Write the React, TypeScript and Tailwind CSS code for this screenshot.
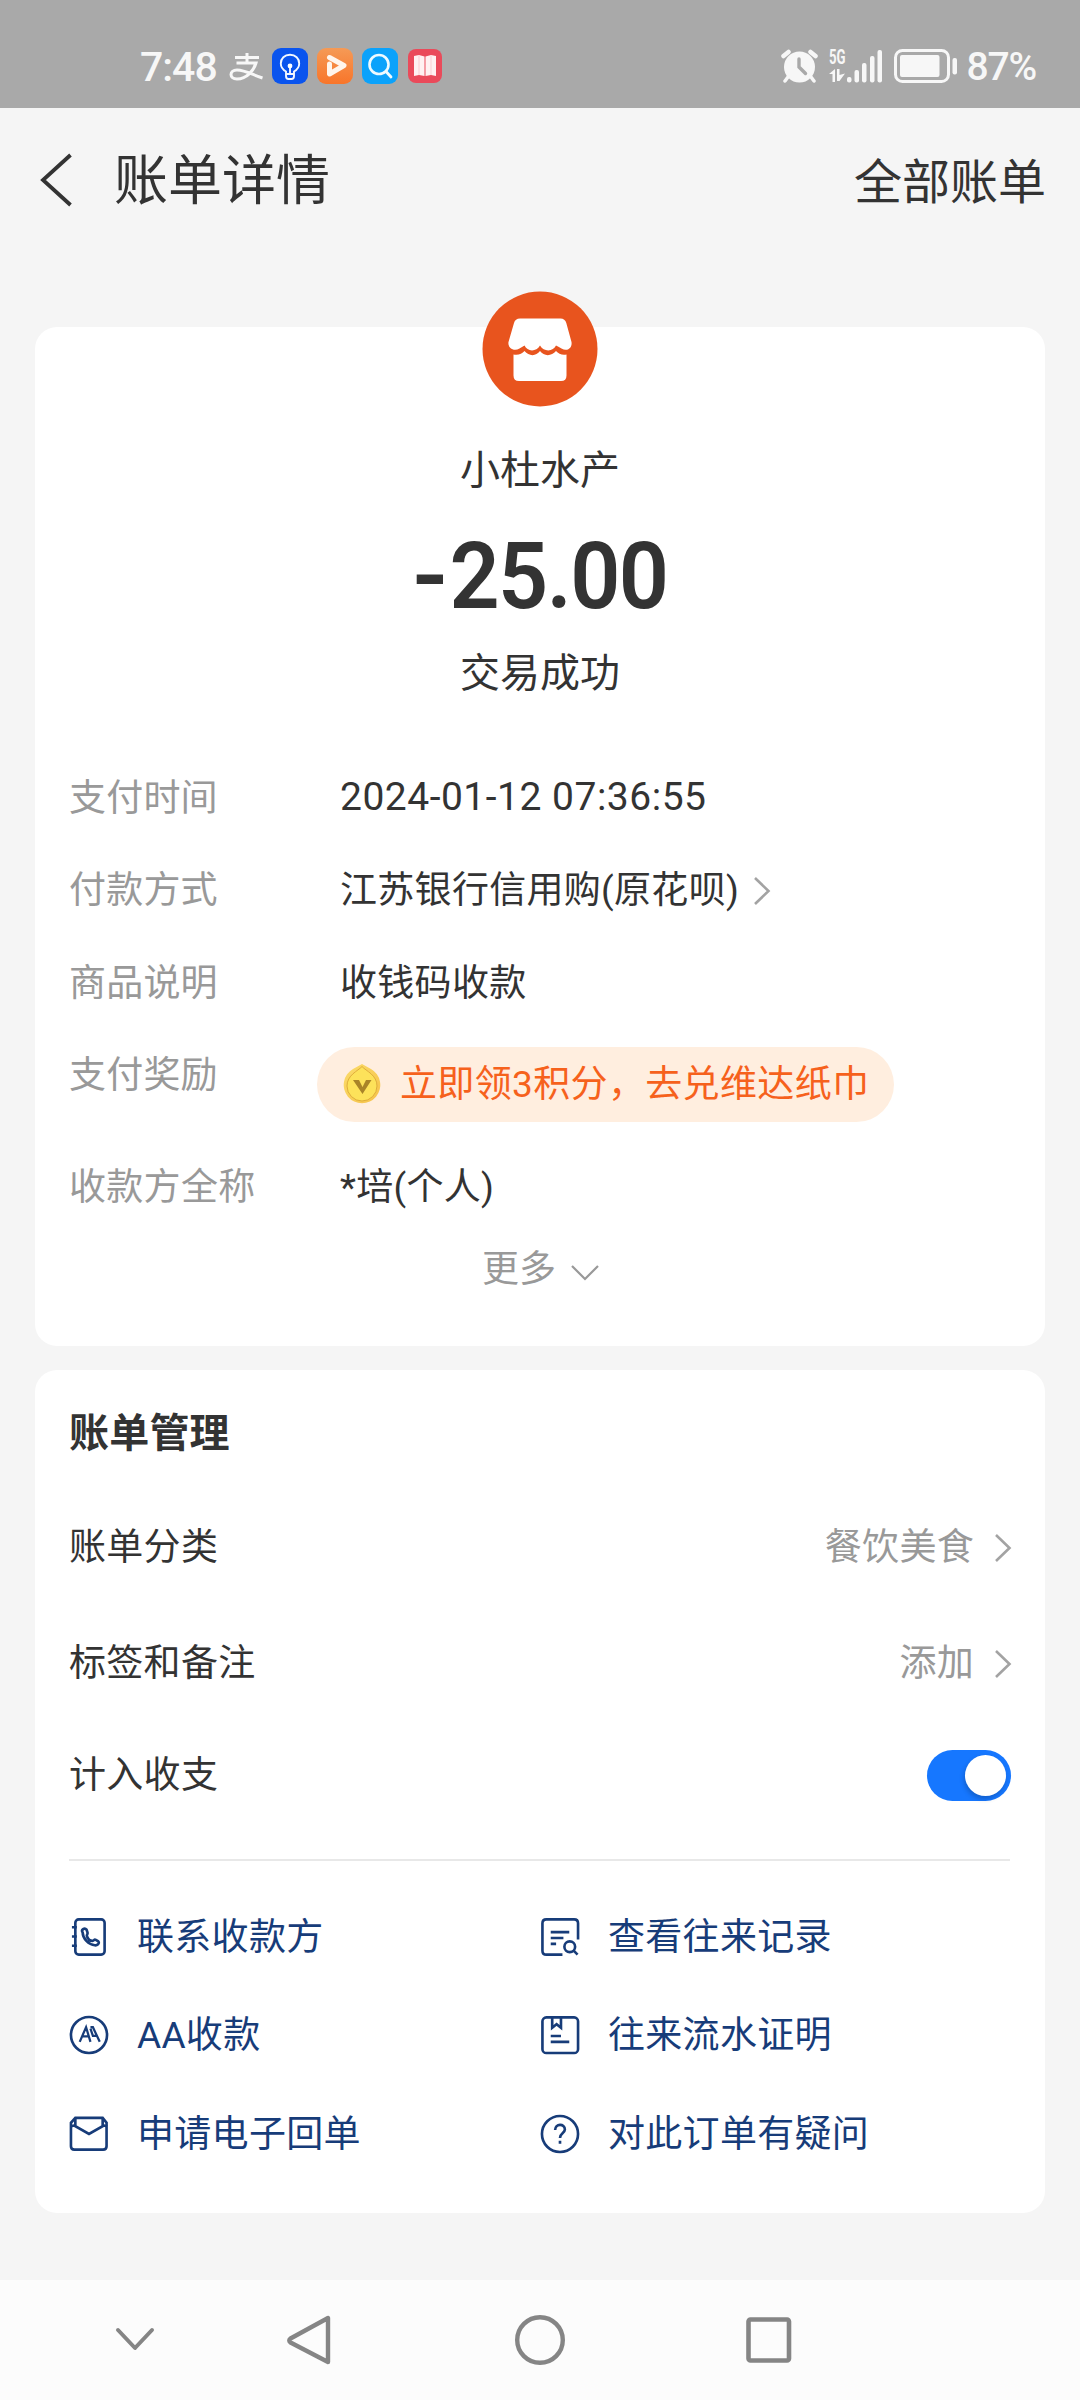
import React from "react";

type Detail = {
  label: string;
  value: string;
  hasArrow?: boolean;
  isDate?: boolean;
};

type Action = {
  label: string;
  icon: React.ReactNode;
};

const details: Detail[] = [
  { label: "支付时间", value: "2024-01-12 07:36:55", isDate: true },
  { label: "付款方式", value: "江苏银行信用购(原花呗)", hasArrow: true },
  { label: "商品说明", value: "收钱码收款" },
];

function ArrowRight() {
  return (
    <svg width="18" height="30" viewBox="0 0 18 30" fill="none" stroke="#a3a3a3" strokeWidth="2.6">
      <path d="M2 2 L15.5 15 L2 28" />
    </svg>
  );
}

function StatusBar() {
  return (
    <div className="flex h-[108px] items-center justify-between bg-[#a9a9a9] pt-[26px] pr-[44px] pl-[140px] text-[#f7f7f7]">
      <div className="flex items-center">
        <span className="w-[88px] text-[41px] leading-none font-medium tracking-[-1px]">7:48</span>
        <svg width="36" height="28" viewBox="0 0 36 28" fill="none" stroke="#f7f7f7" strokeWidth="3">
          <path d="M7 4.500H31M19 0V9M8.500 10H28C26 17 19 26 9 26C1 26 1 17 9 17C17 17 25 22 34.500 25" />
        </svg>
        <svg className="mt-[-2px] ml-[8px]" width="36" height="36" viewBox="0 0 36 36" fill="none">
          <rect width="36" height="36" rx="9" fill="#0a54ee" />
          <path
            d="M14 26V23.500C10.500 21.500 8.800 19 8.800 15.500C8.800 10.500 12.500 6.800 18 6.800S27.200 10.500 27.200 15.500C27.200 19 25.500 21.500 22 23.500V26ZM14 26V28C14 30 15 31 16.500 31H19.500C21 31 22 30 22 28V26M18 19V26"
            stroke="#f2f7ff"
            strokeWidth="1.9"
          />
          <circle cx="18" cy="18" r="2.400" fill="#fff" />
        </svg>
        <svg className="mt-[-2px] ml-[9px]" width="36" height="36" viewBox="0 0 36 36" fill="none">
          <defs>
            <linearGradient id="video" x1="0" y1="0" x2="0" y2="1">
              <stop offset="0" stopColor="#f59a56" />
              <stop offset="1" stopColor="#f8752a" />
            </linearGradient>
          </defs>
          <rect width="36" height="36" rx="9" fill="url(#video)" />
          <path d="M12.500 9.500L27 17.500L12.500 26V16" stroke="#fff5ec" strokeWidth="5" strokeLinecap="round" strokeLinejoin="round" />
        </svg>
        <svg className="mt-[-2px] ml-[9px]" width="36" height="36" viewBox="0 0 36 36" fill="none">
          <rect width="36" height="36" rx="9" fill="#0ba2fb" />
          <circle cx="17" cy="16.500" r="9.500" stroke="#eefaff" strokeWidth="2.600" />
          <path d="M24 23.500L29 29" stroke="#eefaff" strokeWidth="2.800" strokeLinecap="round" />
        </svg>
        <svg className="mt-[-2px] ml-[10px]" width="34" height="34" viewBox="0 0 34 34" fill="none">
          <rect width="34" height="34" rx="8" fill="#ea4a5a" />
          <path d="M6 7L11 6L16.500 7.500V27L11 26L6 27ZM28 7L23 6L17.500 7.500V27L23 26L28 27Z" fill="#fff1f1" />
          <path d="M11 6V26M23 6V26" stroke="#f9cfd2" strokeWidth="1" />
        </svg>
      </div>

      <div className="flex items-center">
        <svg className="mt-[-2px]" width="37" height="34" viewBox="0 0 37 34" fill="none" stroke="#f7f7f7">
          <circle cx="18.500" cy="18" r="15.500" fill="#f7f7f7" stroke="none" />
          <path d="M2.500 7L7.500 3M34.500 7L29.500 3" strokeWidth="4.500" strokeLinecap="round" />
          <path d="M7 28L4 32M30 28L33 32" strokeWidth="3.500" strokeLinecap="round" />
          <path d="M18 10V18L24.500 24.500" stroke="#a9a9a9" strokeWidth="3.400" strokeLinecap="round" />
        </svg>
        <div className="mt-[-2px] ml-[11px] flex h-[34px] items-end">
          <div className="flex h-[34px] w-[17px] flex-col justify-between">
            <span className="mt-[-2px] h-[20px] w-[26px] origin-left scale-x-[0.66] text-[20px] leading-[20px] font-bold">5G</span>
            <svg width="17" height="14" viewBox="0 0 17 14" fill="#f7f7f7">
              <path d="M0 5L6 0V13H3.500V5ZM8 0H10.500V6L16 4.500L10.500 12H8Z" />
            </svg>
          </div>
          <svg width="37" height="34" viewBox="0 0 37 34" fill="#f7f7f7">
            <rect x="1" y="28" width="4.500" height="5.500" rx="2" />
            <rect x="8.500" y="21" width="4.500" height="12.500" rx="2" />
            <rect x="16" y="14" width="4.500" height="19.500" rx="2" />
            <rect x="24" y="7" width="4.500" height="26.500" rx="2" />
            <rect x="31.500" y="1" width="4.500" height="32.500" rx="2" />
          </svg>
        </div>
        <svg className="mt-[-2px] ml-[11px]" width="64" height="34" viewBox="0 0 64 34" fill="none">
          <rect x="1.500" y="1.500" width="53" height="31" rx="7" stroke="#f7f7f7" strokeWidth="3" />
          <rect x="6" y="6" width="39.500" height="22" rx="2" fill="#f7f7f7" />
          <rect x="58.500" y="9" width="4.500" height="16.500" rx="2" fill="#f7f7f7" />
        </svg>
        <span className="ml-[9px] text-[39px] leading-none font-medium tracking-[-1.2px]">87%</span>
      </div>
    </div>
  );
}

function Header() {
  return (
    <header className="flex h-[144px] items-center justify-between pr-[34px] pl-[39px] text-[#333333]">
      <div className="flex items-center">
        <svg width="34" height="54" viewBox="0 0 34 54" fill="none" stroke="#333333" strokeWidth="3.800">
          <path d="M31.500 2L4 27L31.500 52" />
        </svg>
        <h1 className="mt-[3px] ml-[41px] text-[54px] leading-none">账单详情</h1>
      </div>
      <span className="pt-[5px] text-[48px] leading-none">全部账单</span>
    </header>
  );
}

function ShopLogo() {
  return (
    <svg className="mt-[-36px] shrink-0" width="116" height="116" viewBox="0 0 116 116">
      <circle cx="58" cy="58" r="57.500" fill="#e8541e" />
      <path
        d="M38 27.500H78.500Q83 27.500 84.300 32L89.500 51C90.500 57 85 61 79.500 57.500Q77 56 74 54.500C71.500 60.500 62 61.500 58 54.500C54 61.500 45 60.500 42.500 54.500Q40 56 37.500 57.500C32 61 25.500 57 26.500 51L32 32Q33.200 27.500 38 27.500Z"
        fill="#fff"
      />
      <path
        d="M31.500 63.500C36 64.500 40 63 42.500 60C47 65.500 54 65.500 58 60C62 65.500 69.500 65.500 74 60C76.500 63 80.500 64.500 84.500 63.500V84.500Q84.500 90 79 90H37Q31.500 90 31.500 84.500Z"
        fill="#fff"
      />
    </svg>
  );
}

function Coin() {
  return (
    <svg width="38" height="42" viewBox="0 0 38 42">
      <defs>
        <linearGradient id="coin" x1="0" y1="0" x2="1" y2="1">
          <stop offset="0" stopColor="#fbdc6a" />
          <stop offset="1" stopColor="#f6c24a" />
        </linearGradient>
      </defs>
      <path d="M19 1C22 3 25 4 28 6A18.300 18.300 0 1 1 10 6C13 4 16 3 19 1Z" fill="url(#coin)" />
      <path d="M19 3.500C23 8 34 12 34 23A15 15 0 0 1 4 23C4 12 15 8 19 3.500Z" fill="#fde25a" stroke="#dfae3b" strokeWidth="1" />
      <path d="M10 17H16L19.500 24L23 17H28.500L19.500 31Z" fill="#a98428" />
    </svg>
  );
}

function BillCard() {
  return (
    <section className="flex h-[1019px] flex-col items-center rounded-[22px] bg-white px-[34px]">
      <ShopLogo />
      <p className="mt-[34px] text-[40px] leading-[60px]">小杜水产</p>
      <p className="mt-[26px] flex scale-x-[0.955] text-[92px] leading-[100px] font-semibold tracking-[-1.6px]">
        <span className="mr-[7px] inline-block origin-left scale-x-[1.12]">-</span>25.00
      </p>
      <p className="mt-[17px] text-[40px] leading-[60px]">交易成功</p>

      <div className="mt-[48px] w-full text-[37px] leading-none">
        {details.map((item) => (
          <div key={item.label} className="flex h-[92.5px] items-center">
            <span className="w-[271px] tracking-[0.2px] text-[#999999]">{item.label}</span>
            <span className={item.isDate ? "mt-[-1px] text-[39px] tracking-[0.5px]" : "tracking-[0.3px]"}>{item.value}</span>
            {item.hasArrow && (
              <span className="ml-[14px] pt-[1px]">
                <ArrowRight />
              </span>
            )}
          </div>
        ))}

        <div className="flex h-[111px] items-start">
          <span className="w-[248px] pt-[27px] tracking-[0.2px] text-[#999999]">支付奖励</span>
          <div className="mt-[17px] flex h-[75px] w-[577px] items-center rounded-full bg-[#ffeedf] pl-[26px] text-[#f6611c]">
            <Coin />
            <span className="ml-[19px] whitespace-nowrap tracking-[0.35px]">立即领3积分，去兑维达纸巾</span>
          </div>
        </div>

        <div className="flex h-[92px] items-center pt-[2px]">
          <span className="w-[271px] tracking-[0.3px] text-[#999999]">收款方全称</span>
          <span className="tracking-[0.3px]">*培(个人)</span>
        </div>
      </div>

      <div className="flex h-[72px] items-center text-[37px] leading-none text-[#999999]">
        <span className="ml-[2px] pt-[1px]">更多</span>
        <svg className="mt-[9px] ml-[14px]" width="30" height="18" viewBox="0 0 30 18" fill="none" stroke="#999999" strokeWidth="2.200">
          <path d="M2 2L15 15L28 2" />
        </svg>
      </div>
    </section>
  );
}

const actions: Action[] = [
  {
    label: "联系收款方",
    icon: (
      <>
        <rect x="6.500" y="2.500" width="30" height="36" rx="3.500" />
        <path d="M3 10.500H8M3 20H8M3 29.500H8" />
        <path d="M14 16C12 13 16 10.500 18 13L19 16C19.500 18 17.500 18 18.500 20C19.500 22.500 21.500 24.500 24 24.500C26 24.500 25.500 22.500 27.500 23.500L30 25C32 27 28.500 29.500 26.500 29C20 28.500 14 22 14 16Z" />
      </>
    ),
  },
  {
    label: "查看往来记录",
    icon: (
      <>
        <path d="M39 23V6.500Q39 2.500 35 2.500H6.500Q2.500 2.500 2.500 6.500V34.500Q2.500 38.500 6.500 38.500H23" />
        <path d="M11 15.500H30M11 21.500H24M11 27.500H16.500" />
        <circle cx="30.500" cy="30.500" r="5.500" />
        <path d="M34.500 34.500L38.500 38.500" />
      </>
    ),
  },
  {
    label: "AA收款",
    icon: (
      <>
        <circle cx="20.500" cy="20.500" r="18.500" />
        <path d="M11 27.500L17.500 12.500L22 27.500M14 22H20.500M22 12.500H24.500L31.500 27.500M22 14L24.500 21.500H28.500" strokeWidth="2.3" />
      </>
    ),
  },
  {
    label: "往来流水证明",
    icon: (
      <>
        <rect x="2.500" y="2.500" width="36.500" height="36.500" rx="4" />
        <path d="M12.500 3V13L17 9.500L21.500 13V3M11 21.500H21.500M11 27.500H30" />
      </>
    ),
  },
  {
    label: "申请电子回单",
    icon: (
      <>
        <path d="M6.500 4H34.500L38.500 9V33Q38.500 36.500 35 36.500H5.500Q2 36.500 2 33V9Z" />
        <path d="M2 12.500L6.500 11.500M39 12.500L34.500 11.500M6.500 4V12.500L20.500 20.500L34.500 12.500V4" />
      </>
    ),
  },
  {
    label: "对此订单有疑问",
    icon: (
      <>
        <circle cx="20.500" cy="20.500" r="18.500" />
        <path d="M15.500 16.500C15.500 9.500 25.500 9.500 25.500 16C25.500 19.500 20.500 19.500 20.500 24.500M20.500 27.500V30.500" />
      </>
    ),
  },
];

function ManageRow({ label, value }: { label: string; value: string }) {
  return (
    <div className="flex h-[116px] items-center justify-between">
      <span className="pt-[2px] tracking-[0.3px]">{label}</span>
      <div className="flex items-center text-[#999999]">
        <span className="pt-[2px] tracking-[0.3px]">{value}</span>
        <span className="ml-[20px] pt-[4px]">
          <ArrowRight />
        </span>
      </div>
    </div>
  );
}

function ManageCard() {
  return (
    <section className="mt-[24px] h-[843px] rounded-[22px] bg-white pr-[33px] pl-[34px] text-[37px] leading-none">
      <h2 className="flex h-[118px] items-center pt-[9px] text-[40px] font-bold tracking-[0.2px]">账单管理</h2>
      <ManageRow label="账单分类" value="餐饮美食" />
      <ManageRow label="标签和备注" value="添加" />
      <div className="flex h-[110px] items-center justify-between pr-px">
        <span className="pt-[1px] tracking-[0.3px]">计入收支</span>
        <button type="button" aria-label="计入收支" className="flex h-[51px] w-[84px] items-center justify-end rounded-full bg-[#1677ff] pr-[5px]">
          <span className="h-[41px] w-[41px] rounded-full bg-white shadow-[-1px_3px_5px_rgba(0,0,0,0.2)]" />
        </button>
      </div>
      <div className="mt-[29px] mr-[2px] h-[2px] bg-[#e8e8e8]" />
      <div className="mt-[27px] grid grid-cols-[471px_1fr] text-[#173c79]">
        {actions.map((action) => (
          <div key={action.label} className="flex h-[98.5px] items-center">
            <svg className="mt-[-1px]" width="40" height="40" viewBox="0 0 41 41" fill="none" stroke="#173c79" strokeWidth="2.700">
              {action.icon}
            </svg>
            <span className="ml-[28px] tracking-[0.3px]">{action.label}</span>
          </div>
        ))}
      </div>
    </section>
  );
}

function NavBar() {
  return (
    <nav className="flex h-[120px] items-center bg-[#fcfcfc] pl-[114px]">
      <svg width="42" height="28" viewBox="0 0 42 28" fill="none" stroke="#858585" strokeWidth="4" strokeLinecap="round" strokeLinejoin="round">
        <path d="M4 4L21 22L38 4" />
      </svg>
      <svg className="ml-[130px]" width="48" height="52" viewBox="0 0 48 52" fill="none" stroke="#858585" strokeWidth="4.400" strokeLinejoin="round">
        <path d="M42 4V48L4.500 28.500Q2 26.500 4.500 24.500Z" />
      </svg>
      <svg className="ml-[180px]" width="52" height="52" viewBox="0 0 52 52" fill="none" stroke="#858585" strokeWidth="4.400">
        <circle cx="26" cy="26" r="22.800" />
      </svg>
      <svg className="ml-[178px]" width="50" height="50" viewBox="0 0 50 50" fill="none" stroke="#858585" strokeWidth="4.600">
        <rect x="4.500" y="4.500" width="40.500" height="41" rx="2" />
      </svg>
    </nav>
  );
}

export default function App() {
  return (
    <div className="flex h-[2400px] w-[1080px] flex-col bg-[#f5f5f5] font-[Roboto,'Noto_Sans_CJK_SC',sans-serif] text-[#333333]">
      <StatusBar />
      <Header />
      <main className="flex-1 px-[35px] pt-[75px]">
        <BillCard />
        <ManageCard />
      </main>
      <NavBar />
    </div>
  );
}
